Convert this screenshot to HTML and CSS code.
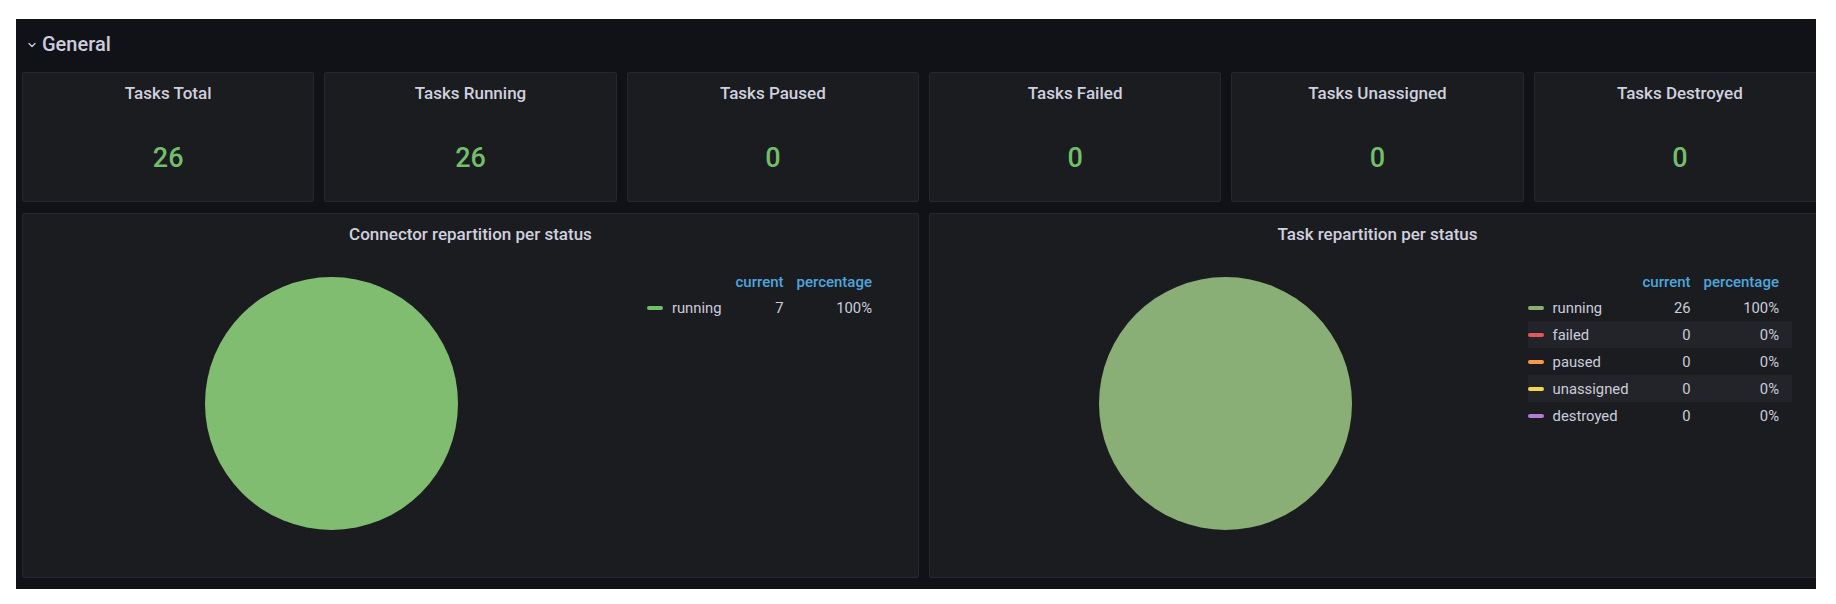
FILE: index.html
```html
<!DOCTYPE html>
<html lang="en">
<head>
  <meta charset="UTF-8" />
  <meta name="viewport" content="width=device-width, initial-scale=1" />
  <title>Kafka Connect - General</title>
  <link rel="stylesheet" href="styles.css">
</head>
<body>

  <div class="dashboard">
    <div class="row-header">
      <svg class="chevron" width="8" height="8" viewBox="0 0 8 8">
        <path d="M1 2.5 L4 5.5 L7 2.5" fill="none" stroke="#ccccdc" stroke-width="1.3" stroke-linecap="round" stroke-linejoin="round" />
      </svg>
      <span class="row-title">General</span>
    </div>

    <div class="panel-grid">
      <div class="panel stat-panel">
        <div class="panel-title">Tasks Total</div>
        <div class="stat-value">26</div>
      </div>
      <div class="panel stat-panel">
        <div class="panel-title">Tasks Running</div>
        <div class="stat-value">26</div>
      </div>
      <div class="panel stat-panel">
        <div class="panel-title">Tasks Paused</div>
        <div class="stat-value">0</div>
      </div>
      <div class="panel stat-panel">
        <div class="panel-title">Tasks Failed</div>
        <div class="stat-value">0</div>
      </div>
      <div class="panel stat-panel">
        <div class="panel-title">Tasks Unassigned</div>
        <div class="stat-value">0</div>
      </div>
      <div class="panel stat-panel">
        <div class="panel-title">Tasks Destroyed</div>
        <div class="stat-value">0</div>
      </div>

      <div class="panel pie-panel">
        <div class="panel-title">Connector repartition per status</div>
        <div class="pie-body">
          <div class="pie-area">
            <div class="pie pie-connector"></div>
          </div>
          <table class="legend">
            <thead>
              <tr><th></th><th>current</th><th>percentage</th></tr>
            </thead>
            <tbody>
              <tr>
                <td><span class="swatch running-bright"></span>running</td>
                <td>7</td>
                <td>100%</td>
              </tr>
            </tbody>
          </table>
        </div>
      </div>

      <div class="panel pie-panel">
        <div class="panel-title">Task repartition per status</div>
        <div class="pie-body">
          <div class="pie-area">
            <div class="pie pie-task"></div>
          </div>
          <table class="legend">
            <thead>
              <tr><th></th><th>current</th><th>percentage</th></tr>
            </thead>
            <tbody>
              <tr>
                <td><span class="swatch running"></span>running</td>
                <td>26</td>
                <td>100%</td>
              </tr>
              <tr>
                <td><span class="swatch failed"></span>failed</td>
                <td>0</td>
                <td>0%</td>
              </tr>
              <tr>
                <td><span class="swatch paused"></span>paused</td>
                <td>0</td>
                <td>0%</td>
              </tr>
              <tr>
                <td><span class="swatch unassigned"></span>unassigned</td>
                <td>0</td>
                <td>0%</td>
              </tr>
              <tr>
                <td><span class="swatch destroyed"></span>destroyed</td>
                <td>0</td>
                <td>0%</td>
              </tr>
            </tbody>
          </table>
        </div>
      </div>
    </div>
  </div>

</body>
</html>
```

FILE: styles.css
```css
body {
  margin: 0;
  background: #ffffff;
  font-family: Roboto, "Liberation Sans", sans-serif;
  color: #ccccdc;
}

.dashboard {
  margin: 19px 20px 15px 16px;
  width: 1800px;
  height: 570px;
  background: #111217;
  overflow: hidden;
}

.row-header {
  display: flex;
  align-items: center;
  height: 53px;
  padding-left: 12px;
  box-sizing: border-box;
  padding-bottom: 4px;
}

.chevron {
  margin-right: 6px;
  margin-top: 2px;
}

.row-title {
  font-size: 20px;
  font-weight: 500;
  line-height: 24px;
}

.panel-grid {
  display: grid;
  grid-template-columns: repeat(6, 1fr);
  grid-template-rows: 130px 365px;
  gap: 11px 10px;
  width: 1804px;
  margin-left: 6px;
}

.panel {
  background: #1a1c20;
  border: 1px solid rgba(204, 204, 220, 0.07);
  border-radius: 3px;
  box-sizing: border-box;
  display: flex;
  flex-direction: column;
}

.panel-title {
  font-size: 17px;
  font-weight: 500;
  line-height: 20px;
  text-align: center;
  color: #d0d0de;
}

.stat-panel {
  padding-top: 10px;
}

.stat-value {
  margin-top: 39px;
  font-size: 27px;
  font-weight: 500;
  line-height: 32px;
  text-align: center;
  color: #73bf69;
}

.pie-panel {
  grid-column: span 3;
  padding-top: 10px;
}

.pie-body {
  flex: 1;
  display: flex;
  padding: 0 33px 15px 7px;
}

.pie-area {
  flex: 1;
  display: flex;
  align-items: center;
  justify-content: center;
  margin-right: 14px;
}

.pie {
  width: 253px;
  height: 253px;
  border-radius: 50%;
}

.pie-connector {
  background: #81bd71;
}

.pie-task {
  background: #89ae76;
}

.legend {
  align-self: flex-start;
  margin-top: 26px;
  border-collapse: collapse;
  font-size: 14.8px;
}

.legend th {
  height: 24px;
  padding: 0 0 0 14px;
  font-size: 15px;
  font-weight: 500;
  text-align: right;
  color: #4ea6df;
}

.legend td {
  height: 27px;
  padding: 0 0 0 14px;
  text-align: right;
  white-space: nowrap;
}

.legend th:first-child,
.legend td:first-child {
  padding-left: 0;
  text-align: left;
}

.legend th:last-child,
.legend td:last-child {
  padding: 0 13px 0 13px;
}

.legend tbody tr:nth-child(even) {
  background: rgba(204, 204, 220, 0.05);
}

.swatch {
  display: inline-block;
  width: 16px;
  height: 4px;
  border-radius: 2px;
  margin-right: 9px;
  vertical-align: middle;
  position: relative;
  top: -1px;
}

.running-bright { background: #73bf69; }
.running { background: #89ae76; }
.failed { background: #e0575f; }
.paused { background: #f29d4b; }
.unassigned { background: #f4d84a; }
.destroyed { background: #b77bd6; }
```
